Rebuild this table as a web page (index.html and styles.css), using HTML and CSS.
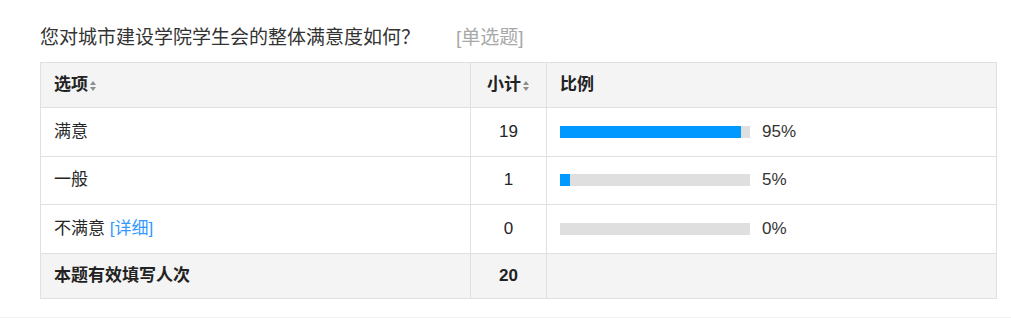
FILE: index.html
```html
<!DOCTYPE html>
<html lang="zh-CN">
<head>
<meta charset="utf-8">
<title>问卷统计</title>
<link rel="stylesheet" href="styles.css">
</head>
<body>
<div class="page">
  <section class="question">
    <h2 class="q-title">您对城市建设学院学生会的整体满意度如何？<span class="q-type">[单选题]</span></h2>
    <table class="stats">
      <colgroup>
        <col class="c-opt">
        <col class="c-cnt">
        <col class="c-ratio">
      </colgroup>
      <thead>
        <tr>
          <th>选项<span class="sort"></span></th>
          <th class="num">小计<span class="sort"></span></th>
          <th>比例</th>
        </tr>
      </thead>
      <tbody>
        <tr>
          <td>满意</td>
          <td class="num">19</td>
          <td><div class="ratio"><div class="bar"><div class="fill" style="width:95%"></div></div><span class="pct">95%</span></div></td>
        </tr>
        <tr>
          <td>一般</td>
          <td class="num">1</td>
          <td><div class="ratio"><div class="bar"><div class="fill" style="width:5%"></div></div><span class="pct">5%</span></div></td>
        </tr>
        <tr>
          <td>不满意 <a class="detail" href="#">[详细]</a></td>
          <td class="num">0</td>
          <td><div class="ratio"><div class="bar"><div class="fill" style="width:0%"></div></div><span class="pct">0%</span></div></td>
        </tr>
      </tbody>
      <tfoot>
        <tr>
          <td>本题有效填写人次</td>
          <td class="num">20</td>
          <td></td>
        </tr>
      </tfoot>
    </table>
  </section>
</div>
</body>
</html>
```

FILE: styles.css
```css
html, body {
  margin: 0;
  padding: 0;
  background: #fff;
}

body {
  font-family: "Liberation Sans", "Noto Sans CJK SC", sans-serif;
  color: #262626;
}

.page {
  height: 317px;
  border-bottom: 1px solid #eeeeee;
}

.question {
  padding: 24px 14px 0 40px;
}

.q-title {
  margin: 0;
  height: 38px;
  line-height: 28px;
  font-size: 19px;
  font-weight: normal;
  color: #333;
}

.q-type {
  margin-left: 36px;
  font-size: 19px;
  color: #a8a8a8;
}

.stats {
  width: 957px;
  border-collapse: collapse;
  table-layout: fixed;
  font-size: 17px;
}

.c-opt { width: 430px; }
.c-cnt { width: 76px; }

.stats th,
.stats td {
  border: 1px solid #e0e0e0;
  padding: 0 13px;
  text-align: left;
  vertical-align: middle;
  line-height: 20px;
}

.stats thead tr { height: 45px; }
.stats tbody tr { height: 48.5px; }
.stats tfoot tr { height: 45px; }

.stats th {
  background: #f4f4f4;
  font-weight: bold;
  color: #222;
}

.stats tfoot td {
  background: #f4f4f4;
  font-weight: bold;
  color: #222;
}

.stats .num {
  text-align: center;
  padding: 0;
}

/* up/down sort arrows */
.sort {
  display: inline-block;
  position: relative;
  width: 7px;
  height: 10px;
  margin-left: 2px;
  vertical-align: -1px;
}

.sort::before,
.sort::after {
  content: "";
  position: absolute;
  left: 0;
  border-left: 3.5px solid transparent;
  border-right: 3.5px solid transparent;
}

.sort::before {
  top: 0;
  border-bottom: 4.5px solid #8c8c8c;
}

.sort::after {
  bottom: 0;
  border-top: 4.5px solid #8c8c8c;
}

.ratio {
  display: flex;
  align-items: center;
  gap: 12px;
}

.bar {
  width: 190px;
  height: 12px;
  background: #dfdfdf;
}

.fill {
  height: 100%;
  background: #0099ff;
}

.pct {
  font-size: 17px;
  color: #333;
}

.detail {
  color: #3399ff;
  text-decoration: none;
}
```
